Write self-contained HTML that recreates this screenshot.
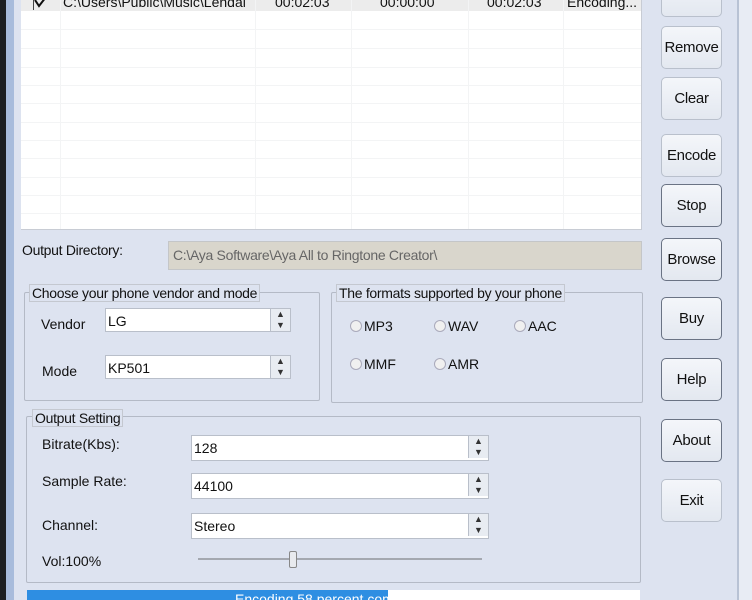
<!DOCTYPE html><html><head><style>
body{margin:0;width:752px;height:600px;overflow:hidden;background:#dde3f0;font-family:"Liberation Sans",sans-serif;font-size:14px;color:#111;position:relative}
.a{position:absolute}
.btn{position:absolute;left:661px;width:59px;height:41px;border:1px solid #b9c0cc;border-radius:5px;background:linear-gradient(#f4f6fa,#e3e8f0);text-align:center;line-height:41px;font-size:15px;letter-spacing:-0.3px}
.grp{position:absolute;border:1px solid #b4bac6;border-radius:2px}
.leg{position:absolute;background:#dde3f0;border:1px solid #c4c8d0;padding:0 2px;font-size:14px;line-height:16px;letter-spacing:-0.3px}
.cb{position:absolute;height:24px;background:#fff;border:1px solid #b9bfca;font-size:14px;line-height:24px;padding-left:2px;box-sizing:border-box}
.cb i{position:absolute;right:0;top:0;width:19px;height:22px;border-left:1px solid #b9bfca;background:#e8ecf2;font-style:normal;font-size:9px;line-height:11px;text-align:center;color:#333}
.rd{position:absolute;font-size:14px}
.rd:before{content:"";display:inline-block;width:10px;height:10px;border:1px solid #aab;border-radius:6px;background:#f0f0f0;margin-right:2px;vertical-align:-1px}
</style></head><body>
<div class="a" style="left:0;top:0;width:6px;height:600px;background:#1c1f22"></div>
<div class="a" style="left:6px;top:0;width:8px;height:600px;background:#a8bcdc"></div>
<div class="a" style="left:737px;top:0;width:2px;height:600px;background:#b8c2d4"></div>
<div class="a" style="left:739px;top:0;width:13px;height:600px;background:#e8ecf4"></div>
<div class="a" style="left:21px;top:0;width:620px;height:229px;background:#fff;border-right:1px solid #c8ccd4;border-bottom:1px solid #c8ccd4;overflow:hidden">
<svg width="620" height="229" style="position:absolute;left:0;top:0">
<rect x="0" y="0" width="620" height="11" fill="#ececec"/>
<g stroke="#f3f4f5" stroke-width="1">
<line x1="39.5" y1="0" x2="39.5" y2="229"/><line x1="234.5" y1="0" x2="234.5" y2="229"/><line x1="330.5" y1="0" x2="330.5" y2="229"/><line x1="447.5" y1="0" x2="447.5" y2="229"/><line x1="542.5" y1="0" x2="542.5" y2="229"/>
<line x1="0" y1="29.5" x2="620" y2="29.5"/><line x1="0" y1="48.5" x2="620" y2="48.5"/><line x1="0" y1="67.5" x2="620" y2="67.5"/><line x1="0" y1="85.5" x2="620" y2="85.5"/><line x1="0" y1="103.5" x2="620" y2="103.5"/><line x1="0" y1="122.5" x2="620" y2="122.5"/><line x1="0" y1="140.5" x2="620" y2="140.5"/><line x1="0" y1="158.5" x2="620" y2="158.5"/><line x1="0" y1="177.5" x2="620" y2="177.5"/><line x1="0" y1="195.5" x2="620" y2="195.5"/><line x1="0" y1="213.5" x2="620" y2="213.5"/>
</g>
<path d="M14 0 L18 6 L25 -3" stroke="#111" stroke-width="2" fill="none"/>
<line x1="12.5" y1="0" x2="12.5" y2="10" stroke="#444"/>
</svg>
<div class="a" style="left:42px;top:-6px;font-size:14px">C:\Users\Public\Music\Lendal</div>
<div class="a" style="left:254px;top:-6px">00:02:03</div>
<div class="a" style="left:359px;top:-6px">00:00:00</div>
<div class="a" style="left:466px;top:-6px">00:02:03</div>
<div class="a" style="left:546px;top:-6px">Encoding...</div>
</div>
<div class="btn" style="top:-26px">Add</div>
<div class="btn" style="top:26px">Remove</div>
<div class="btn" style="top:77px">Clear</div>
<div class="btn" style="top:134px">Encode</div>
<div class="btn" style="top:184px;border-color:#6a7384">Stop</div>
<div class="btn" style="top:238px;border-color:#6a7384">Browse</div>
<div class="btn" style="top:297px;border-color:#6a7384">Buy</div>
<div class="btn" style="top:358px;border-color:#6a7384">Help</div>
<div class="btn" style="top:419px;border-color:#6a7384">About</div>
<div class="btn" style="top:479px">Exit</div>
<div class="a" style="left:22px;top:242px;letter-spacing:-0.3px">Output Directory:</div>
<div class="a" style="left:168px;top:241px;width:474px;height:29px;background:#d9d6cc;border:1px solid #c4c6c8;color:#666;line-height:27px;padding-left:4px;box-sizing:border-box;letter-spacing:-0.3px">C:\Aya Software\Aya All to Ringtone Creator\</div>
<div class="grp" style="left:24px;top:292px;width:294px;height:107px"></div>
<div class="leg" style="left:29px;top:284px">Choose your phone vendor and mode</div>
<div class="grp" style="left:331px;top:292px;width:310px;height:109px"></div>
<div class="leg" style="left:336px;top:284px">The formats supported by your phone</div>
<div class="a" style="left:41px;top:316px">Vendor</div>
<div class="cb" style="left:105px;top:308px;width:186px">LG<i>▲<br>▼</i></div>
<div class="a" style="left:42px;top:363px">Mode</div>
<div class="cb" style="left:105px;top:355px;width:186px">KP501<i>▲<br>▼</i></div>
<div class="rd" style="left:350px;top:318px">MP3</div>
<div class="rd" style="left:434px;top:318px">WAV</div>
<div class="rd" style="left:514px;top:318px">AAC</div>
<div class="rd" style="left:350px;top:356px">MMF</div>
<div class="rd" style="left:434px;top:356px">AMR</div>
<div class="grp" style="left:26px;top:416px;width:613px;height:165px"></div>
<div class="leg" style="left:32px;top:409px">Output Setting</div>
<div class="a" style="left:42px;top:436px">Bitrate(Kbs):</div>
<div class="cb" style="left:191px;top:435px;width:298px;height:26px">128<i>▲<br>▼</i></div>
<div class="a" style="left:42px;top:473px">Sample Rate:</div>
<div class="cb" style="left:191px;top:473px;width:298px;height:26px">44100<i>▲<br>▼</i></div>
<div class="a" style="left:42px;top:517px">Channel:</div>
<div class="cb" style="left:191px;top:513px;width:298px;height:26px">Stereo<i>▲<br>▼</i></div>
<div class="a" style="left:42px;top:553px">Vol:100%</div>
<div class="a" style="left:198px;top:558px;width:284px;height:2px;background:#a4a8b0"></div>
<div class="a" style="left:289px;top:551px;width:6px;height:15px;background:#e8eaee;border:1px solid #888;border-radius:2px"></div>
<div class="a" style="left:27px;top:590px;width:613px;height:10px;background:#fff;overflow:hidden">
<div class="a" style="left:0;top:0;width:361px;height:10px;background:#2e8ee2"></div>
<div class="a" style="left:208px;top:1px;font-size:14px;color:#fff">Encoding 58 percent complete</div>
</div>
</body></html>
